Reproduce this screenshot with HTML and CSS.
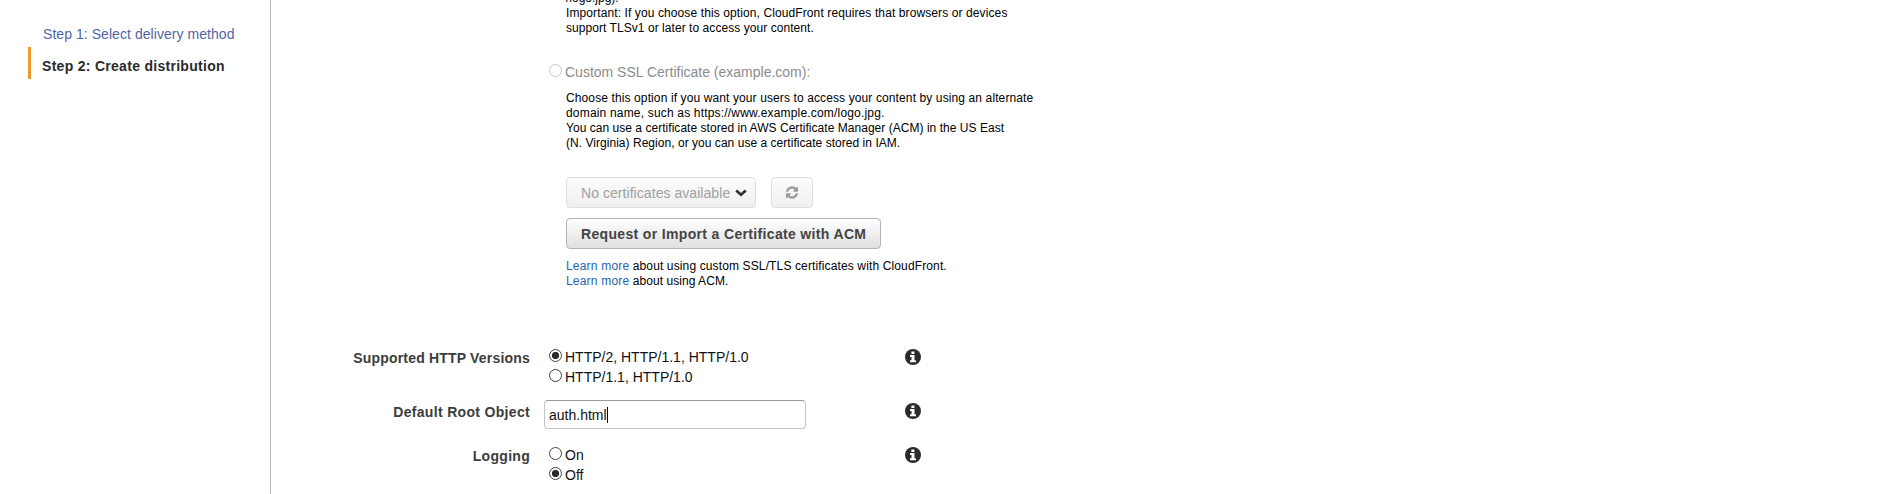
FILE: index.html
```html
<!DOCTYPE html>
<html lang="en">
<head>
<meta charset="utf-8">
<title>Create distribution</title>
<link rel="stylesheet" href="styles.css">
</head>
<body>
<svg width="0" height="0" class="sprite">
  <symbol id="info" viewBox="0 0 16 16">
    <circle cx="8" cy="8" r="8" fill="#2b2b2b"/>
    <path d="M6.4 2.4h3v2.5h-3zM5 6h4.5v5.2h1.4v2H5v-2h1.5V8H5z" fill="#fff"/>
  </symbol>
</svg>
<div class="page">
  <nav class="steps">
    <a class="step"><span class="ls-5">Step 1: Select delivery method</span></a>
    <div class="step current"><span class="ls-29">Step 2: Create distribution</span></div>
  </nav>
  <main class="form">
    <section class="ssl">
      <p class="help"><span>/logo.jpg).</span><br><span class="ls-10">Important: If you choose this option, CloudFront requires that browsers or devices</span><br><span class="ls-5">support TLSv1 or later to access your content.</span></p>
      <label class="option disabled"><i class="radio"></i><span>Custom SSL Certificate (example.com):</span></label>
      <p class="help choose"><span class="ls-11">Choose this option if you want your users to access your content by using an alternate</span><br><span class="ls-18">domain name, such as https://www.example.com/logo.jpg.</span><br><span class="ls-4">You can use a certificate stored in AWS Certificate Manager (ACM) in the US East</span><br><span class="ls-4">(N. Virginia) Region, or you can use a certificate stored in IAM.</span></p>
      <div class="cert-row">
        <button class="btn select" disabled><span class="ls-5">No certificates available</span>
          <svg width="12" height="8" viewBox="0 0 12 8"><path d="M1.2 1.5 6 5.7l4.8-4.2" fill="none" stroke="#333" stroke-width="2.8"/></svg>
        </button>
        <button class="btn refresh" disabled>
          <svg width="13" height="13" viewBox="0 0 1536 1536"><path fill="#999" stroke="#999" stroke-width="50" d="M1511 928q0 5-1 7-64 268-268 434.500T764 1536q-146 0-282.500-55T238 1324l-129 129q-19 19-45 19t-45-19-19-45V960q0-26 19-45t45-19h448q26 0 45 19t19 45-19 45l-137 137q71 66 161 102t187 36q134 0 250-65t186-179q11-17 53-117 8-23 30-23h192q13 0 22.500 9.500t9.500 22.500zm25-800v448q0 26-19 45t-45 19h-448q-26 0-45-19t-19-45 19-45l138-138Q969 256 768 256q-134 0-250 65T332 500q-11 17-53 117-8 23-30 23H50q-13 0-22.500-9.500T18 608v-7q65-268 270-434.500T768 0q146 0 284 55.500T1297 212l130-129q19-19 45-19t45 19 19 45z"/></svg>
        </button>
      </div>
      <button class="btn request"><span class="ls-34">Request or Import a Certificate with ACM</span></button>
      <p class="help more"><a class="ls-20">Learn more</a> <span class="ls-13">about using custom SSL/TLS certificates with CloudFront.</span><br><a class="ls-20">Learn more</a> <span class="ls-5">about using ACM.</span></p>
    </section>
    <section class="row http">
      <div class="name ls-19"><span>Supported HTTP Versions</span></div>
      <div class="control">
        <label class="option"><i class="radio checked"></i><span>HTTP/2, HTTP/1.1, HTTP/1.0</span></label>
        <label class="option"><i class="radio"></i><span>HTTP/1.1, HTTP/1.0</span></label>
      </div>
      <svg class="info" width="16" height="16"><use href="#info"/></svg>
    </section>
    <section class="row root">
      <div class="name ls-32"><span>Default Root Object</span></div>
      <div class="control"><div class="input"><span>auth.html</span><i class="caret"></i></div></div>
      <svg class="info" width="16" height="16"><use href="#info"/></svg>
    </section>
    <section class="row logging">
      <div class="name ls-29"><span>Logging</span></div>
      <div class="control">
        <label class="option"><i class="radio"></i><span>On</span></label>
        <label class="option"><i class="radio checked"></i><span>Off</span></label>
      </div>
      <svg class="info" width="16" height="16"><use href="#info"/></svg>
    </section>
  </main>
</div>
</body>
</html>
```
FILE: styles.css
```css
* { box-sizing: border-box; }
body {
  margin: 0;
  height: 494px;
  overflow: hidden;
  background: #fff;
  color: #111;
  font: 14px/20px "Liberation Sans", Arial, sans-serif;
}
.sprite { display: none; }
.page { display: flex; height: 494px; }
.steps {
  width: 271px;
  flex: none;
  padding: 19px 0 0 28px;
  border-right: 1px solid #b5b5b5;
}
.step {
  display: flex;
  align-items: center;
  height: 28px;
  padding: 2px 0 0 15px;
  color: #5264a8;
  white-space: nowrap;
}
.step.current {
  height: 32px;
  padding: 5px 0 0 11px;
  border-left: 3px solid #ec9a2d;
  color: #2b2b2b;
  font-weight: bold;
}
.ls-4 { letter-spacing: .035px; }
.ls-5 { letter-spacing: .055px; }
.ls-10 { letter-spacing: .105px; }
.ls-11 { letter-spacing: .113px; }
.ls-13 { letter-spacing: .13px; }
.ls-18 { letter-spacing: .18px; }
.ls-19 { letter-spacing: .19px; }
.ls-20 { letter-spacing: .2px; }
.ls-29 { letter-spacing: .29px; }
.ls-32 { letter-spacing: .32px; }
.ls-34 { letter-spacing: .34px; }
.form { flex: 1; height: 494px; overflow: hidden; }
.ssl { height: 354px; padding-left: 295px; }
.help {
  margin: -9px 0 0;
  color: #000;
  font-size: 12px;
  line-height: 15px;
  white-space: nowrap;
}
.option {
  display: flex;
  gap: 3px;
  height: 20px;
  white-space: nowrap;
}
.radio {
  width: 13px;
  height: 13px;
  margin-top: 2px;
  border: 1px solid #444;
  border-radius: 50%;
  background: #fff;
}
.radio.checked { background: radial-gradient(circle, #2b2b2b 3.3px, #fff 4px); }
.disabled { margin: 26px 0 0 -17px; color: #8c8c8c; }
.disabled .radio { border-color: #c6c6c6; }
.help.choose { margin-top: 9px; }
.cert-row { display: flex; gap: 15px; margin-top: 26px; }
.btn {
  display: flex;
  align-items: center;
  height: 31px;
  padding: 0 14px;
  border: 1px solid #b3b3b3;
  border-radius: 4px;
  background: linear-gradient(#fff, #e0e0e0);
  color: #444;
  font: bold 14px/20px "Liberation Sans", Arial, sans-serif;
  white-space: nowrap;
}
.btn:disabled {
  border-color: #dedede;
  background: linear-gradient(#fdfdfd, #efefef);
  color: #a0a0a0;
  font-weight: normal;
}
.select { width: 190px; justify-content: space-between; padding-right: 8px; }
.refresh { width: 42px; justify-content: center; }
.request { width: 315px; margin-top: 10px; }
.help.more { margin-top: 10px; }
.more a { color: #2765ae; }
.row {
  display: grid;
  grid-template-columns: 259px 277px 98px 16px;
  align-items: start;
}
.name { color: #3c3c3c; font-weight: bold; text-align: right; white-space: nowrap; }
.control { padding-left: 14px; }
.control .option { padding-left: 5px; }
.info { grid-column: 4; }
.http { height: 55px; padding-top: 2px; }
.http .name, .logging .name { margin-top: 1px; }
.http .info { margin-top: 2px; }
.root { height: 45px; }
.root .name { margin-top: 2px; }
.root .info { margin-top: 3px; }
.logging { padding-top: 0; }
.input {
  display: flex;
  align-items: center;
  width: 262px;
  height: 29px;
  padding: 1px 0 0 4px;
  border: 1px solid #c4c4c4;
  border-top-color: #999;
  border-radius: 4px;
}
.caret { width: 1px; height: 16px; background: #000; }
.logging .info { margin-top: 2px; }
```
